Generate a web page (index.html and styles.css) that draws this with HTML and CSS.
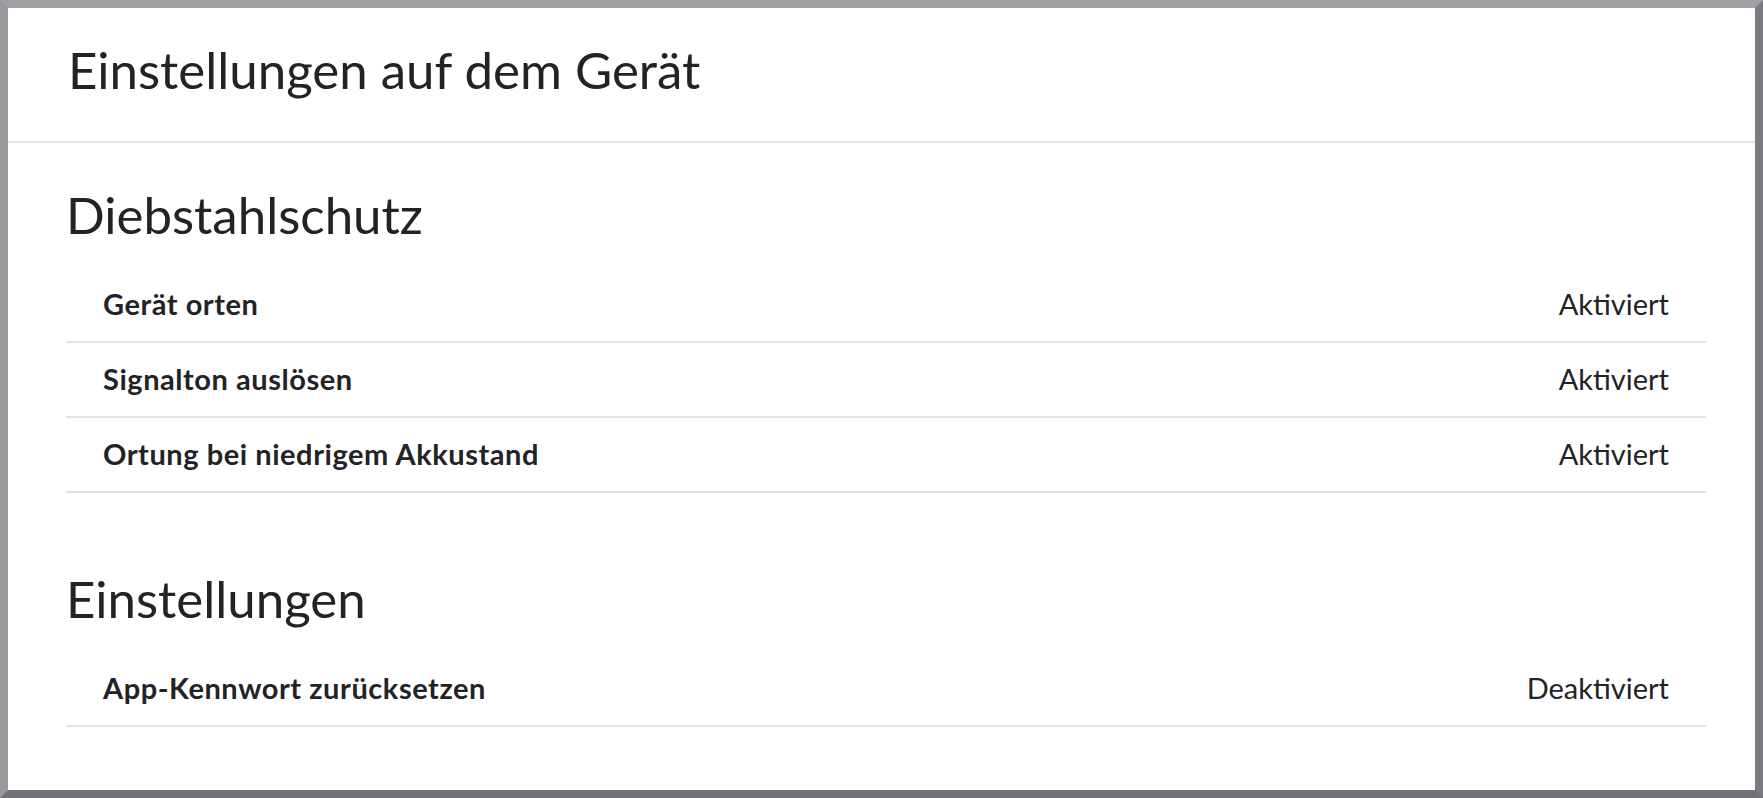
FILE: index.html
```html
<!DOCTYPE html>
<html lang="de">
<head>
<meta charset="utf-8">
<title>Einstellungen auf dem Gerät</title>
<link rel="stylesheet" href="styles.css">
</head>
<body>
<div class="frame">
  <header class="page-header">
    <h1 class="page-title">Einstellungen auf dem Gerät</h1>
  </header>
  <main class="content">
    <section class="section first">
      <h2 class="section-title">Diebstahlschutz</h2>
      <ul class="rows">
        <li class="row"><span class="row-label">Gerät orten</span><span class="row-value">Aktiviert</span></li>
        <li class="row"><span class="row-label">Signalton auslösen</span><span class="row-value">Aktiviert</span></li>
        <li class="row"><span class="row-label">Ortung bei niedrigem Akkustand</span><span class="row-value">Aktiviert</span></li>
      </ul>
    </section>
    <section class="section">
      <h2 class="section-title">Einstellungen</h2>
      <ul class="rows">
        <li class="row"><span class="row-label">App-Kennwort zurücksetzen</span><span class="row-value">Deaktiviert</span></li>
      </ul>
    </section>
  </main>
</div>
</body>
</html>
```
FILE: styles.css
```css
html, body {
  margin: 0;
  padding: 0;
  background: #ffffff;
}

body {
  font-family: Lato, "Open Sans", "Noto Sans", sans-serif;
  color: #222326;
}

.frame {
  box-sizing: border-box;
  width: 1763px;
  height: 798px;
  border-style: solid;
  border-width: 8px;
  border-top-color: #a0a0a5;
  border-left-color: #98989d;
  border-right-color: #7b7b80;
  border-bottom-color: #717176;
  background: #ffffff;
  overflow: hidden;
}

.page-header {
  padding: 35px 0 45px 60px;
  border-bottom: 2px solid #e2e2e2;
}

.page-title {
  margin: 0;
  font-size: 51px;
  line-height: 53px;
  font-weight: 400;
}

.content {
  padding: 0 49px 0 58px;
}

.section {
  margin-top: 79px;
}

.section.first {
  margin-top: 45px;
}

.section-title {
  margin: 0 0 27px 0;
  font-size: 51px;
  line-height: 53px;
  font-weight: 400;
}

.rows {
  list-style: none;
  margin: 0;
  padding: 0;
}

.row {
  display: flex;
  justify-content: space-between;
  align-items: baseline;
  padding: 22px 37px 23px 37px;
  border-bottom: 2px solid #e2e2e2;
  font-size: 29px;
  line-height: 28px;
}

.row-label {
  font-weight: 700;
  letter-spacing: 0.55px;
}

.row-value {
  font-weight: 400;
}
```
